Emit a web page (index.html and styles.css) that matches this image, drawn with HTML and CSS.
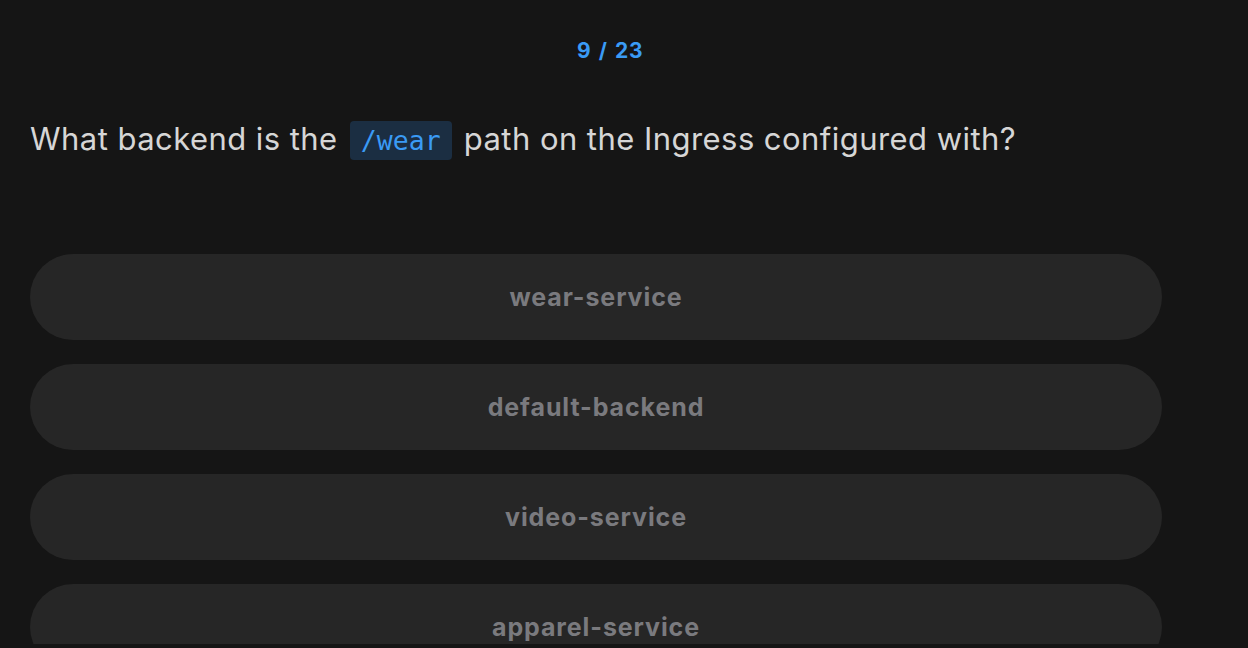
FILE: index.html
```html
<!DOCTYPE html>
<html lang="en">
<head>
<meta charset="utf-8">
<title>Quiz</title>
<link rel="stylesheet" href="styles.css">
</head>
<body>
<main class="viewport">
  <div class="quiz">
    <div class="counter">9 / 23</div>
    <h1 class="question">What backend is the <code class="code">/wear</code> path on the Ingress configured with?</h1>
    <ul class="options">
      <li class="option">wear-service</li>
      <li class="option">default-backend</li>
      <li class="option">video-service</li>
      <li class="option">apparel-service</li>
    </ul>
  </div>
</main>
</body>
</html>
```

FILE: styles.css
```css
html, body {
  margin: 0;
  padding: 0;
  background: #151515;
}
body {
  font-family: Inter, "Noto Sans", sans-serif;
}
.viewport {
  height: 644px;
  overflow: hidden;
}
.quiz {
  padding: 36px 58px 0 30px;
  display: flex;
  flex-direction: column;
}
.counter {
  text-align: center;
  color: #3a9bf5;
  font-size: 21px;
  font-weight: 700;
  line-height: 30px;
  word-spacing: 2px;
  letter-spacing: 0.6px;
}
.question {
  margin: 52px 0 0;
  color: #d6d6d6;
  font-size: 31px;
  font-weight: 400;
  line-height: 42px;
  letter-spacing: 0.45px;
}
.code {
  font-family: "DejaVu Sans Mono", monospace;
  font-size: 26.5px;
  letter-spacing: 0;
  color: #3a9bf5;
  background: #1b2e42;
  border-radius: 4px;
  padding: 4px 11px;
  margin: 0 3px;
}
.options {
  list-style: none;
  margin: 92px 28px 0 0;
  padding: 0;
  display: flex;
  flex-direction: column;
  gap: 24px;
}
.option {
  height: 86px;
  border-radius: 43px;
  background: #262626;
  color: #7a7a7e;
  font-size: 25px;
  font-weight: 700;
  letter-spacing: 0.9px;
  display: flex;
  align-items: center;
  justify-content: center;
}
```
